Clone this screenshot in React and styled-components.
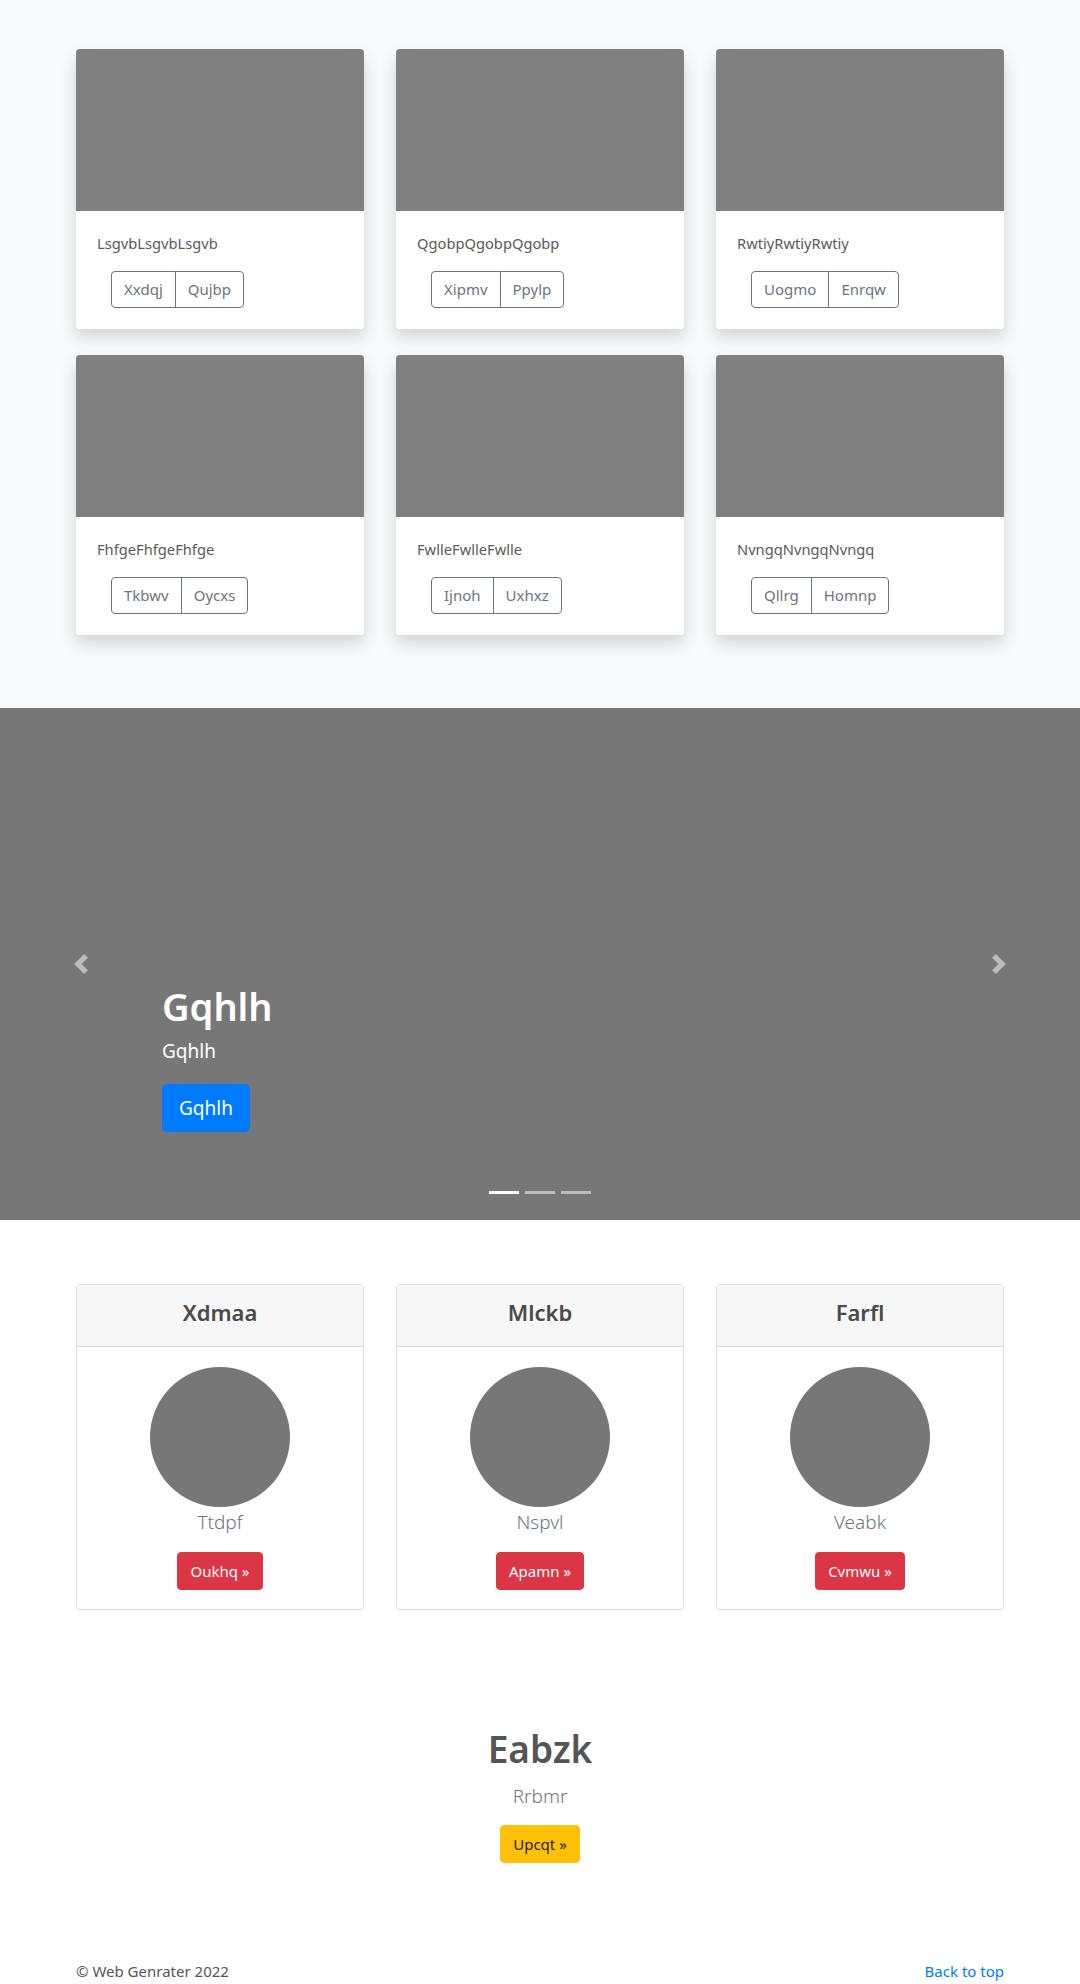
import React from "react";
import styled, { createGlobalStyle } from "styled-components";

const Global = createGlobalStyle`
  html, body { margin: 0; padding: 0; }
  body {
    font-family: "Noto Sans", "Open Sans", sans-serif;
    color: #555;
    background: #fff;
    font-size: 16px;
    line-height: 1.5;
  }
  * { box-sizing: border-box; }
`;

const Album = styled.section`
  background: #f8f9fa;
  padding: 49px 0 73px;
`;

const Container = styled.div`
  width: 960px;
  margin: 0 auto;
  padding: 0 16px;
`;

const Grid = styled.div`
  display: grid;
  grid-template-columns: repeat(3, 288px);
  column-gap: 32px;
  row-gap: ${(p) => p.$rowGap || 26}px;
`;

const ShadowCard = styled.div`
  background: #fff;
  border-radius: 4px;
  overflow: hidden;
  box-shadow: 0 8px 16px rgba(0, 0, 0, 0.15);
  height: 280px;
  display: flex;
  flex-direction: column;
`;

const Thumb = styled.div`
  height: 162px;
  background: #808080;
`;

const CardBody = styled.div`
  padding: 20px 21px 20px;
`;

const CardText = styled.p`
  margin: 0 0 16px;
  font-size: 14.7px;
  line-height: 24px;
  color: #5a5a5a;
`;

const BtnGroup = styled.div`
  display: inline-flex;
  margin-left: 14px;
`;

const OutlineBtn = styled.button`
  font-family: inherit;
  font-size: 15px;
  line-height: 21px;
  padding: 7px 12px;
  color: #6c757d;
  background: transparent;
  border: 1px solid #6c757d;
  border-radius: 0;
  &:first-child { border-radius: 4px 0 0 4px; }
  &:last-child { border-radius: 0 4px 4px 0; margin-left: -1px; }
`;

const Carousel = styled.section`
  position: relative;
  height: 512px;
  background: #777;
  display: flex;
  flex-direction: column;
  justify-content: flex-end;
`;

const Caption = styled.div`
  padding-left: 162px;
  color: #fff;
`;

const CaptionTitle = styled.h1`
  margin: 0 0 6px;
  font-size: 38px;
  font-weight: 600;
  line-height: 48px;
`;

const Lead = styled.p`
  margin: 0 0 18px;
  font-size: 19px;
  line-height: 30px;
`;

const PrimaryLg = styled.button`
  font-family: inherit;
  font-size: 19px;
  line-height: 30px;
  padding: 8px 16px;
  color: #fff;
  background: #007bff;
  border: 1px solid #007bff;
  border-radius: 5px;
`;

const Indicators = styled.ol`
  list-style: none;
  display: flex;
  justify-content: center;
  gap: 6px;
  margin: 59px 0 26px;
  padding: 0;
`;

const Indicator = styled.li`
  width: 30px;
  height: 3px;
  background: #fff;
  opacity: ${(p) => (p.$active ? 1 : 0.5)};
`;

const Control = styled.button`
  position: absolute;
  top: 0;
  bottom: 0;
  ${(p) => (p.$side === "left" ? "left: 0;" : "right: 0;")}
  width: 162px;
  background: none;
  border: 0;
  display: flex;
  align-items: center;
  justify-content: center;
  opacity: 0.5;
  padding: 0;
`;

const Pricing = styled.section`
  padding: 64px 0 0;
`;

const BorderCard = styled.div`
  border: 1px solid rgba(0, 0, 0, 0.125);
  border-radius: 4px;
  background: #fff;
  text-align: center;
`;

const CardHeader = styled.div`
  background: #f7f7f7;
  border-bottom: 1px solid rgba(0, 0, 0, 0.125);
  height: 62px;
  padding-bottom: 7px;
  display: flex;
  align-items: center;
  justify-content: center;
`;

const HeaderTitle = styled.h4`
  margin: 0;
  font-size: 22px;
  font-weight: 600;
  line-height: 28px;
  color: #4a4a4a;
`;

const PriceBody = styled.div`
  padding: 20px 20px 19px;
  display: flex;
  flex-direction: column;
  align-items: center;
`;

const Avatar = styled.div`
  width: 140px;
  height: 140px;
  border-radius: 50%;
  background: #777;
`;

const LightText = styled.p`
  margin: ${(p) => p.$margin || "0"};
  font-size: 19px;
  line-height: 30px;
  font-weight: 300;
  color: #6c757d;
`;

const SolidBtn = styled.button`
  font-family: inherit;
  font-size: 15px;
  line-height: 22px;
  padding: 7px 12px;
  border-radius: 4px;
  border: 1px solid ${(p) => p.$bg};
  background: ${(p) => p.$bg};
  color: ${(p) => p.$fg};
`;

const Jumbo = styled.section`
  padding: 115px 0 0;
  text-align: center;
`;

const JumboTitle = styled.h1`
  margin: 0 0 8px;
  font-size: 37px;
  font-weight: 600;
  line-height: 48px;
  color: #555;
`;

const Footer = styled.footer`
  padding-top: 96px;
`;

const FooterRow = styled.div`
  display: flex;
  justify-content: space-between;
  font-size: 15px;
  line-height: 24px;
`;

const FooterLink = styled.a`
  color: #007bff;
  text-decoration: none;
`;

const albumCards = [
  ["LsgvbLsgvbLsgvb", "Xxdqj", "Qujbp"],
  ["QgobpQgobpQgobp", "Xipmv", "Ppylp"],
  ["RwtiyRwtiyRwtiy", "Uogmo", "Enrqw"],
  ["FhfgeFhfgeFhfge", "Tkbwv", "Oycxs"],
  ["FwlleFwlleFwlle", "Ijnoh", "Uxhxz"],
  ["NvngqNvngqNvngq", "Qllrg", "Homnp"],
];

const pricing = [
  ["Xdmaa", "Ttdpf", "Oukhq"],
  ["Mlckb", "Nspvl", "Apamn"],
  ["Farfl", "Veabk", "Cvmwu"],
];

const Chevron = ({ dir }) => (
  <svg width="20" height="20" viewBox="0 0 8 8" fill="#fff">
    {dir === "left" ? (
      <path d="M5.25 0l-4 4 4 4 1.5-1.5L4.25 4l2.5-2.5L5.25 0z" />
    ) : (
      <path d="M2.75 0l-1.5 1.5L3.75 4l-2.5 2.5L2.75 8l4-4-4-4z" />
    )}
  </svg>
);

export default function App() {
  return (
    <>
      <Global />
      <Album>
        <Container>
          <Grid>
            {albumCards.map(([t, a, b]) => (
              <ShadowCard key={t}>
                <Thumb />
                <CardBody>
                  <CardText>{t}</CardText>
                  <BtnGroup>
                    <OutlineBtn>{a}</OutlineBtn>
                    <OutlineBtn>{b}</OutlineBtn>
                  </BtnGroup>
                </CardBody>
              </ShadowCard>
            ))}
          </Grid>
        </Container>
      </Album>

      <Carousel>
        <Caption>
          <CaptionTitle>Gqhlh</CaptionTitle>
          <Lead>Gqhlh</Lead>
          <PrimaryLg>Gqhlh</PrimaryLg>
        </Caption>
        <Indicators>
          <Indicator $active />
          <Indicator />
          <Indicator />
        </Indicators>
        <Control $side="left" aria-label="Previous">
          <Chevron dir="left" />
        </Control>
        <Control $side="right" aria-label="Next">
          <Chevron dir="right" />
        </Control>
      </Carousel>

      <Pricing>
        <Container>
          <Grid>
            {pricing.map(([h, s, b]) => (
              <BorderCard key={h}>
                <CardHeader>
                  <HeaderTitle>{h}</HeaderTitle>
                </CardHeader>
                <PriceBody>
                  <Avatar />
                  <LightText $margin="0 0 15px">{s}</LightText>
                  <SolidBtn $bg="#dc3545" $fg="#fff">{b} »</SolidBtn>
                </PriceBody>
              </BorderCard>
            ))}
          </Grid>
        </Container>
      </Pricing>

      <Jumbo>
        <JumboTitle>Eabzk</JumboTitle>
        <LightText $margin="0 0 14px">Rrbmr</LightText>
        <SolidBtn $bg="#ffc107" $fg="#212529">Upcqt »</SolidBtn>
      </Jumbo>

      <Footer>
        <Container>
          <FooterRow>
            <span>© Web Genrater 2022</span>
            <FooterLink href="#">Back to top</FooterLink>
          </FooterRow>
        </Container>
      </Footer>
    </>
  );
}
